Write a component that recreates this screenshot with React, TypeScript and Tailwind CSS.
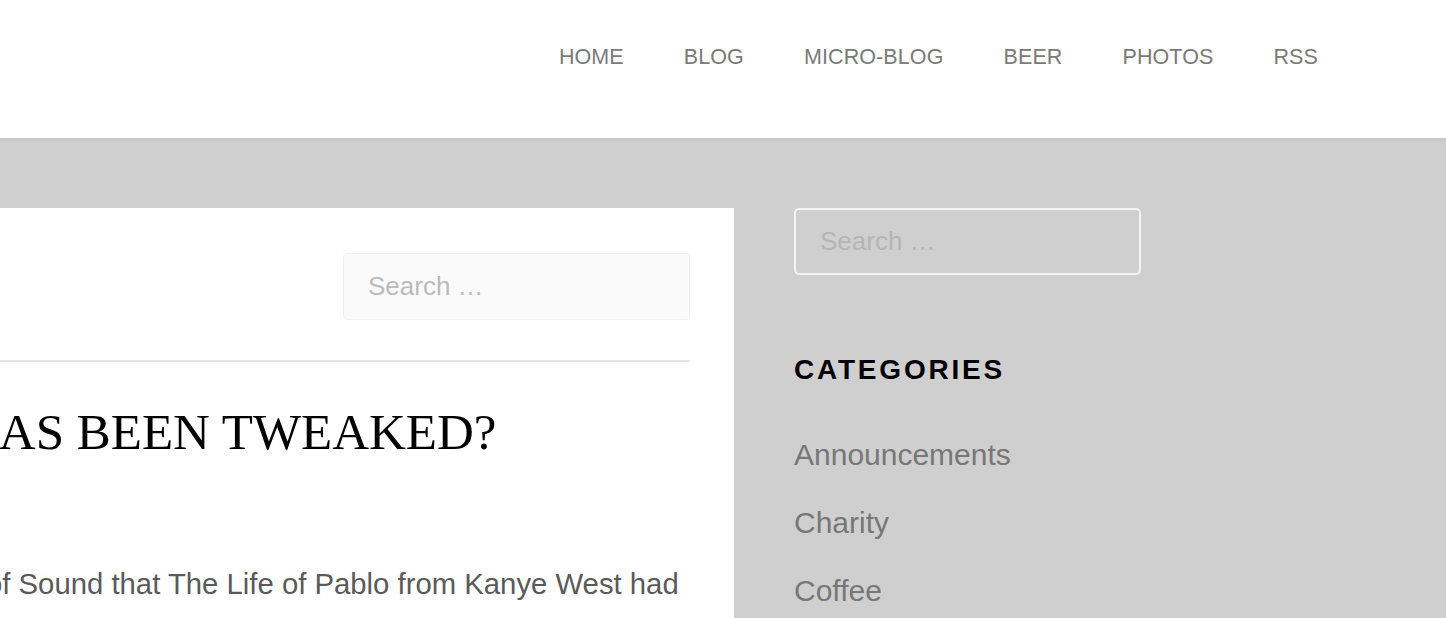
const navItems = ["HOME", "BLOG", "MICRO-BLOG", "BEER", "PHOTOS", "RSS"];

const categories = ["Announcements", "Charity", "Coffee"];

const App = () => {
  return (
    <div className="min-h-screen bg-[#cfcfcf] font-['Liberation_Sans',Arial,sans-serif]">
      <header className="h-[138px] bg-white flex items-start justify-end pt-[45px] pr-[128px]">
        <nav className="flex gap-[60px] text-[21.5px] leading-[24px] text-[#7a7a7a]">
          {navItems.map((item) => (
            <a key={item} href="#" className="tracking-[0.1px]">
              {item}
            </a>
          ))}
        </nav>
      </header>

      <div className="flex gap-[60px] pt-[70px] h-[480px] overflow-hidden shadow-[inset_0_5px_5px_-4px_rgba(0,0,0,0.08)]">
        <main className="w-[734px] shrink-0 bg-white pr-[44px] pt-[45px] overflow-hidden">
          <div className="flex justify-end">
            <div className="w-[347px] h-[67px] bg-[#fafafa] border border-[#f0f0f0] rounded-[4px] flex items-center pl-[24px] text-[26px] text-[#bbbbbb]">
              Search …
            </div>
          </div>
          <div className="mt-[40px] border-t-2 border-[#e6e6e6]"></div>
          <h1 className="mt-[40px] ml-[-38px] whitespace-nowrap font-['Liberation_Serif','Times_New_Roman',serif] text-[51px] leading-[60px] text-black">
            HAS BEEN TWEAKED?
          </h1>
          <p className="mt-[100px] ml-[-14px] whitespace-nowrap text-[29.3px] leading-[44px] text-[#5a5a5a]">
            of Sound that The Life of Pablo from Kanye West had
          </p>
        </main>

        <aside className="w-[347px] shrink-0">
          <div className="h-[67px] border-2 border-[#f4f4f4] rounded-[5px] flex items-center pl-[24px] text-[26px] text-[#b5b5b5]">
            Search …
          </div>
          <h2 className="mt-[79px] text-[28px] leading-[32px] font-bold tracking-[0.1em] text-black">
            CATEGORIES
          </h2>
          <ul className="mt-[35px] text-[30px] leading-[68px] text-[#777777]">
            {categories.map((c) => (
              <li key={c}>
                <a href="#">{c}</a>
              </li>
            ))}
          </ul>
        </aside>
      </div>
    </div>
  );
};

export default App;
